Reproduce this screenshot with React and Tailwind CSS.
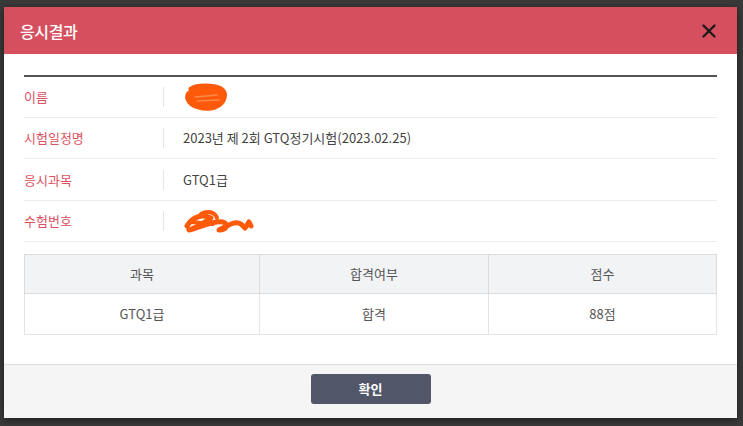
import React from "react";
import { X } from "lucide-react";

const font = { fontFamily: '"Noto Sans CJK KR", "Noto Sans", sans-serif' };

const Scribble = ({ wide }) =>
  wide ? (
    <svg width="72" height="26" viewBox="0 0 72 26" className="block">
      <path d="M4 18 C10 8, 20 6, 28 10 C22 14, 12 20, 6 22 C16 20, 30 12, 40 14 C46 16, 44 22, 36 22 C44 18, 52 12, 58 16 L62 20 L66 14 L68 18"
        fill="none" stroke="#ff5a0a" strokeWidth="5" strokeLinecap="round" strokeLinejoin="round" />
      <path d="M18 6 C24 2, 32 4, 34 10 M8 14 L30 16" fill="none" stroke="#ff5a0a" strokeWidth="4" strokeLinecap="round" />
    </svg>
  ) : (
    <svg width="46" height="28" viewBox="0 0 46 28" className="block">
      <path d="M8 6 C14 2, 30 2, 38 6 C44 10, 42 20, 32 24 C22 27, 8 24, 5 16 C3 10, 10 6, 20 7 C30 8, 38 12, 36 18 C34 23, 20 24, 12 20"
        fill="#ff5a0a" stroke="#ff5a0a" strokeWidth="5" strokeLinecap="round" strokeLinejoin="round" />
      <path d="M12 14 L34 12 M14 18 L36 17" stroke="#ff8a4a" strokeWidth="1.5" strokeLinecap="round" />
    </svg>
  );

const rows = [
  { label: "이름", value: <Scribble />, h: "h-[41px]" },
  { label: "시험일정명", value: "2023년 제 2회 GTQ정기시험(2023.02.25)", h: "h-[41px]" },
  { label: "응시과목", value: "GTQ1급", h: "h-[42px]" },
  { label: "수험번호", value: <Scribble wide />, h: "h-[41px]" },
];

export default function App() {
  return (
    <div className="w-[743px] h-[426px] bg-[#3a3a3a] pt-[7px] pl-[4px] overflow-hidden" style={font}>
      <div className="w-[733px] h-[411px] bg-white flex flex-col shadow-[0_2px_8px_rgba(0,0,0,0.5)]">
        {/* header */}
        <div className="h-[47px] bg-[#d64f5e] flex items-center justify-between pl-[16px] pr-[17px]">
          <span className="text-white text-[16px] font-medium tracking-tight">응시결과</span>
          <X size={22} strokeWidth={2.6} className="text-[#1a1a1a]" />
        </div>

        {/* body */}
        <div className="flex-1 px-[20px] pt-[21px]">
          <div className="border-t-2 border-[#555]">
            {rows.map((r) => (
              <div key={r.label} className={`${r.h} flex items-center border-b border-[#ececec]`}>
                <div className="w-[139px] text-[13px] text-[#dc5262]">{r.label}</div>
                <div className="w-px h-[20px] bg-[#e4e4e4]" />
                <div className="pl-[19px] text-[13px] text-[#444]">{r.value}</div>
              </div>
            ))}
          </div>

          <table className="w-full mt-[12px] border-collapse text-[13px] text-[#555]">
            <thead>
              <tr className="h-[39px] bg-[#f2f3f5]">
                <th className="w-[235px] border border-[#dcdcdc] font-normal">과목</th>
                <th className="w-[229px] border border-[#dcdcdc] font-normal">합격여부</th>
                <th className="border border-[#dcdcdc] font-normal">점수</th>
              </tr>
            </thead>
            <tbody>
              <tr className="h-[41px]">
                <td className="border border-[#e4e4e4] text-center">GTQ1급</td>
                <td className="border border-[#e4e4e4] text-center">합격</td>
                <td className="border border-[#e4e4e4] text-center">88점</td>
              </tr>
            </tbody>
          </table>
        </div>

        {/* footer */}
        <div className="h-[54px] bg-[#f5f5f5] border-t border-[#dedede] flex justify-center pt-[9px]">
          <button className="w-[120px] h-[30px] bg-[#525669] rounded-[3px] text-white text-[13px] font-bold">확인</button>
        </div>
      </div>
    </div>
  );
}
